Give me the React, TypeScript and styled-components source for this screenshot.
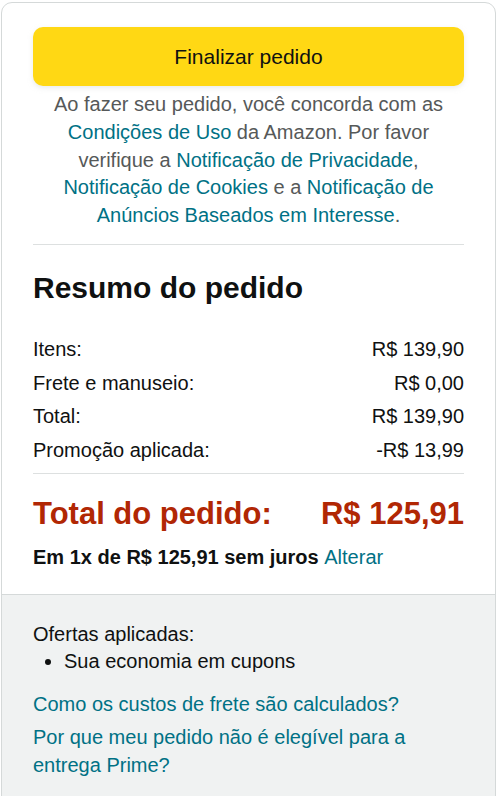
import React from "react";
import styled, { createGlobalStyle } from "styled-components";

const GlobalStyle = createGlobalStyle`
  html, body {
    margin: 0;
    padding: 0;
    background: #ffffff;
  }
  body {
    font-family: "Liberation Sans", Arial, sans-serif;
    color: #0f1111;
    -webkit-font-smoothing: antialiased;
  }
`;

const Page = styled.div`
  padding: 2px 4px 0 1px;
`;

const Card = styled.section`
  border: 1px solid #d5d9d9;
  border-radius: 11px;
  overflow: hidden;
  background: #ffffff;
`;

const TopSection = styled.div`
  padding: 24px 31px 23px;
`;

const PlaceOrderButton = styled.button`
  display: block;
  width: 100%;
  height: 59px;
  border: none;
  border-radius: 10px;
  background: #ffd814;
  box-shadow: 0 2px 5px 0 rgba(213, 217, 217, 0.5);
  font-family: inherit;
  font-size: 21px;
  color: #0f1111;
  cursor: pointer;
`;

const Legal = styled.p`
  margin: 5px 0 0;
  text-align: center;
  font-size: 20px;
  line-height: 27.8px;
  color: #565959;
`;

const Link = styled.a`
  color: #007185;
  text-decoration: none;
`;

const Divider = styled.hr<{ $top: number }>`
  border: none;
  border-top: 1px solid #dde0e0;
  margin: ${(p) => p.$top}px 0 0;
`;

const Heading = styled.h2`
  margin: 24px 0 0;
  font-size: 30px;
  line-height: 38px;
  font-weight: 700;
`;

const SummaryList = styled.div`
  display: flex;
  flex-direction: column;
  gap: 5.6px;
  margin-top: 28px;
`;

const Row = styled.div`
  display: flex;
  justify-content: space-between;
  font-size: 20px;
  line-height: 28px;
`;

const TotalRow = styled.div`
  display: flex;
  justify-content: space-between;
  margin-top: 21px;
  font-size: 31px;
  line-height: 38px;
  font-weight: 700;
  color: #b12704;
`;

const Installment = styled.div`
  margin-top: 10px;
  font-size: 20px;
  line-height: 28px;
  font-weight: 700;

  a {
    font-weight: 400;
  }
`;

const BottomSection = styled.div`
  border-top: 1px solid #d5d9d9;
  background: #f0f2f2;
  padding: 26px 31px 30px;
`;

const OffersBlock = styled.div`
  font-size: 20px;
  line-height: 27px;
`;

const OfferList = styled.ul`
  margin: 0;
  padding-left: 31px;
  list-style: disc;
`;

const HelpLinks = styled.div`
  display: flex;
  flex-direction: column;
  gap: 5px;
  margin-top: 15px;
  font-size: 20px;
  line-height: 28px;
`;

const summary = [
  { label: "Itens:", value: "R$ 139,90" },
  { label: "Frete e manuseio:", value: "R$ 0,00" },
  { label: "Total:", value: "R$ 139,90" },
  { label: "Promoção aplicada:", value: "-R$ 13,99" },
];

export default function App() {
  return (
    <>
      <GlobalStyle />
      <Page>
        <Card>
          <TopSection>
            <PlaceOrderButton>Finalizar pedido</PlaceOrderButton>
            <Legal>
              Ao fazer seu pedido, você concorda com as
              <br />
              <Link href="#">Condições de Uso</Link> da Amazon. Por favor
              <br />
              verifique a <Link href="#">Notificação de Privacidade</Link>,
              <br />
              <Link href="#">Notificação de Cookies</Link> e a{" "}
              <Link href="#">Notificação de</Link>
              <br />
              <Link href="#">Anúncios Baseados em Interesse</Link>.
            </Legal>
            <Divider $top={14} />
            <Heading>Resumo do pedido</Heading>
            <SummaryList>
              {summary.map((r) => (
                <Row key={r.label}>
                  <span>{r.label}</span>
                  <span>{r.value}</span>
                </Row>
              ))}
            </SummaryList>
            <Divider $top={9} />
            <TotalRow>
              <span>Total do pedido:</span>
              <span>R$ 125,91</span>
            </TotalRow>
            <Installment>
              Em 1x de R$ 125,91 sem juros <Link href="#">Alterar</Link>
            </Installment>
          </TopSection>
          <BottomSection>
            <OffersBlock>
              Ofertas aplicadas:
              <OfferList>
                <li>Sua economia em cupons</li>
              </OfferList>
            </OffersBlock>
            <HelpLinks>
              <Link href="#">Como os custos de frete são calculados?</Link>
              <Link href="#">
                Por que meu pedido não é elegível para a entrega Prime?
              </Link>
            </HelpLinks>
          </BottomSection>
        </Card>
      </Page>
    </>
  );
}
